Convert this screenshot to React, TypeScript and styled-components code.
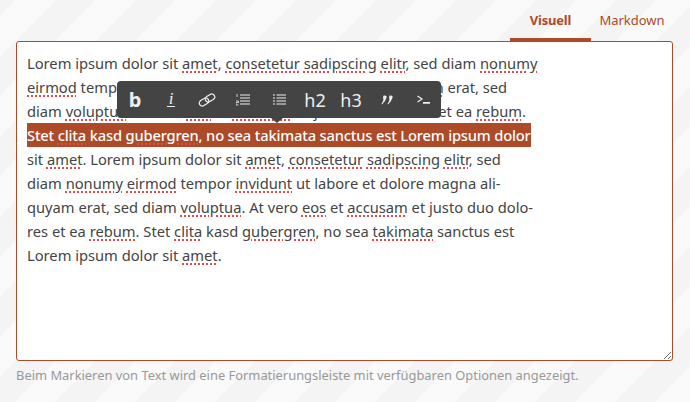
import React from 'react'
import styled, { createGlobalStyle } from 'styled-components'

const GlobalStyle = createGlobalStyle`
  html, body {
    margin: 0;
    height: 100%;
  }
  body {
    font-family: "Noto Sans", "Open Sans", sans-serif;
    background-color: #fafafa;
    background-image: repeating-linear-gradient(
      135deg,
      #f4f4f4 0,
      #f4f4f4 11.31px,
      #fafafa 11.31px,
      #fafafa 39.6px,
      #f4f4f4 39.6px,
      #f4f4f4 56.57px
    );
  }
`

const Typo: React.FC<{ children: React.ReactNode }> = ({ children }) => <Squiggle>{children}</Squiggle>

const App: React.FC = () => {
  return (
    <Page>
      <GlobalStyle />
      <Tabs>
        <Tab $active>Visuell</Tab>
        <Tab>Markdown</Tab>
      </Tabs>
      <Editor>
        <Line>Lorem ipsum dolor sit <Typo>amet</Typo>, <Typo>consetetur</Typo> <Typo>sadipscing</Typo> <Typo>elitr</Typo>, sed diam <Typo>nonumy</Typo></Line>
        <Line><Typo>eirmod</Typo> tempor <Typo>invidunt</Typo> ut labore et dolore magna <Typo>aliquyam</Typo> erat, sed</Line>
        <Line>diam <Typo>voluptua</Typo>. At vero <Typo>eos</Typo> et <Typo>accusam</Typo> et justo duo dolores et ea <Typo>rebum</Typo>.</Line>
        <Line><Selected>Stet <Typo>clita</Typo> kasd <Typo>gubergren</Typo>, no sea takimata sanctus est Lorem ipsum dolor</Selected></Line>
        <Line>sit <Typo>amet</Typo>. Lorem ipsum dolor sit <Typo>amet</Typo>, <Typo>consetetur</Typo> <Typo>sadipscing</Typo> <Typo>elitr</Typo>, sed</Line>
        <Line>diam <Typo>nonumy</Typo> <Typo>eirmod</Typo> tempor <Typo>invidunt</Typo> ut labore et dolore magna ali-</Line>
        <Line>quyam erat, sed diam <Typo>voluptua</Typo>. At vero <Typo>eos</Typo> et <Typo>accusam</Typo> et justo duo dolo-</Line>
        <Line>res et ea <Typo>rebum</Typo>. Stet <Typo>clita</Typo> kasd <Typo>gubergren</Typo>, no sea <Typo>takimata</Typo> sanctus est</Line>
        <Line>Lorem ipsum dolor sit <Typo>amet</Typo>.</Line>
        <Toolbar>
          <ToolButton $bold>b</ToolButton>
          <ToolButton><ItalicGlyph>i</ItalicGlyph></ToolButton>
          <ToolButton>
            <svg width="18" height="14" viewBox="0 0 18 14" fill="none" stroke="#eee" strokeWidth="1.2">
              <rect x="1" y="6" width="10" height="6" rx="3" transform="rotate(-32 6 9)" />
              <rect x="7" y="2" width="10" height="6" rx="3" transform="rotate(-32 12 5)" />
            </svg>
          </ToolButton>
          <ToolButton>
            <svg width="14" height="12" viewBox="0 0 14 12" fill="none" stroke="#eee" strokeWidth="1">
              <path d="M4 1H14M4 4H14M4 7H14M4 10H14" />
              <path d="M1 0V3M0 7H2.5V8.5H0V11H2.5" strokeWidth="0.8" />
            </svg>
          </ToolButton>
          <ToolButton>
            <svg width="13" height="12" viewBox="0 0 13 12" fill="none" stroke="#eee" strokeWidth="1">
              <path d="M3.5 1H13M3.5 4H13M3.5 7H13M3.5 10H13" />
              <path d="M0 1H2M0 4H2M0 7H2M0 10H2" />
            </svg>
          </ToolButton>
          <ToolButton $heading>h2</ToolButton>
          <ToolButton $heading>h3</ToolButton>
          <ToolButton>
            <svg width="12" height="10" viewBox="0 0 12 10" fill="#eee">
              <path d="M2.6 0.5Q6 0 5.6 2.6Q4.6 6.4 1 9.5L0.4 9Q2.4 6 2.4 4.4Q1.6 2 2.6 0.5Z" />
              <path d="M8.6 0.5Q12 0 11.6 2.6Q10.6 6.4 7 9.5L6.4 9Q8.4 6 8.4 4.4Q7.6 2 8.6 0.5Z" />
            </svg>
          </ToolButton>
          <ToolButton>
            <svg width="13" height="9" viewBox="0 0 13 9" fill="none" stroke="#eee">
              <path d="M0.5 1L5 4L0.5 7" strokeWidth="1.2" />
              <path d="M6 7.8H13" strokeWidth="1.8" />
            </svg>
          </ToolButton>
          <Arrow />
        </Toolbar>
      </Editor>
      <Hint>Beim Markieren von Text wird eine Formatierungsleiste mit verfügbaren Optionen angezeigt.</Hint>
    </Page>
  )
}

export default App

const Page = styled.div`
  box-sizing: border-box;
  width: 690px;
  height: 402px;
  padding: 0 17px 0 16px;
  overflow: hidden;
`

const Tabs = styled.div`
  display: flex;
  justify-content: flex-end;
  height: 41px;
`

const Tab = styled.div<{ $active?: boolean }>`
  box-sizing: border-box;
  width: ${(p) => (p.$active ? '81px' : '82px')};
  height: 43px;
  padding-top: 11px;
  border-bottom: ${(p) => (p.$active ? '5px solid #ad4a28' : 'none')};
  text-align: center;
  font-size: 13px;
  line-height: 18px;
  font-weight: ${(p) => (p.$active ? 700 : 400)};
  letter-spacing: ${(p) => (p.$active ? '-0.2px' : '0')};
  color: #ad4a28;
`

const Editor = styled.div`
  position: relative;
  box-sizing: border-box;
  height: 320px;
  padding: 9px 10px;
  background: #fff;
  border: 1px solid #ad4a28;
  border-radius: 3px;
  resize: both;
  overflow: hidden;
`

const Line = styled.div`
  height: 24px;
  font-size: 14.7px;
  line-height: 24px;
  white-space: nowrap;
  color: #444;
`

const Squiggle = styled.span`
  text-decoration: underline dotted #e8484a;
  text-decoration-thickness: 1.5px;
  text-underline-offset: 2px;
`

const Selected = styled.span`
  display: inline-block;
  background: #ad4a28;
  color: #fff;
  font-weight: 500;
  letter-spacing: -0.17px;
`

const Toolbar = styled.div`
  position: absolute;
  left: 100px;
  top: 39px;
  display: grid;
  grid-template-columns: repeat(9, 36px);
  align-items: center;
  height: 37px;
  background: #444;
  border-radius: 4px;
`

const ToolButton = styled.div<{ $bold?: boolean; $heading?: boolean }>`
  display: flex;
  align-items: center;
  justify-content: center;
  height: 26px;
  color: #eee;
  font-size: ${(p) => (p.$heading ? '18px' : p.$bold ? '20px' : '17px')};
  line-height: 26px;
  font-weight: ${(p) => (p.$bold ? 700 : 400)};
`

const ItalicGlyph = styled.span`
  width: 8px;
  height: 14px;
  border-bottom: 1px solid #eee;
  text-align: center;
  font-family: "Liberation Serif", serif;
  font-style: italic;
  font-size: 17px;
  line-height: 14px;
`

const Arrow = styled.div`
  position: absolute;
  left: 154px;
  bottom: -5px;
  border-left: 6px solid transparent;
  border-right: 6px solid transparent;
  border-top: 5px solid #444;
`

const Hint = styled.div`
  margin-top: 6px;
  font-size: 12.9px;
  line-height: 16px;
  color: #999;
`
